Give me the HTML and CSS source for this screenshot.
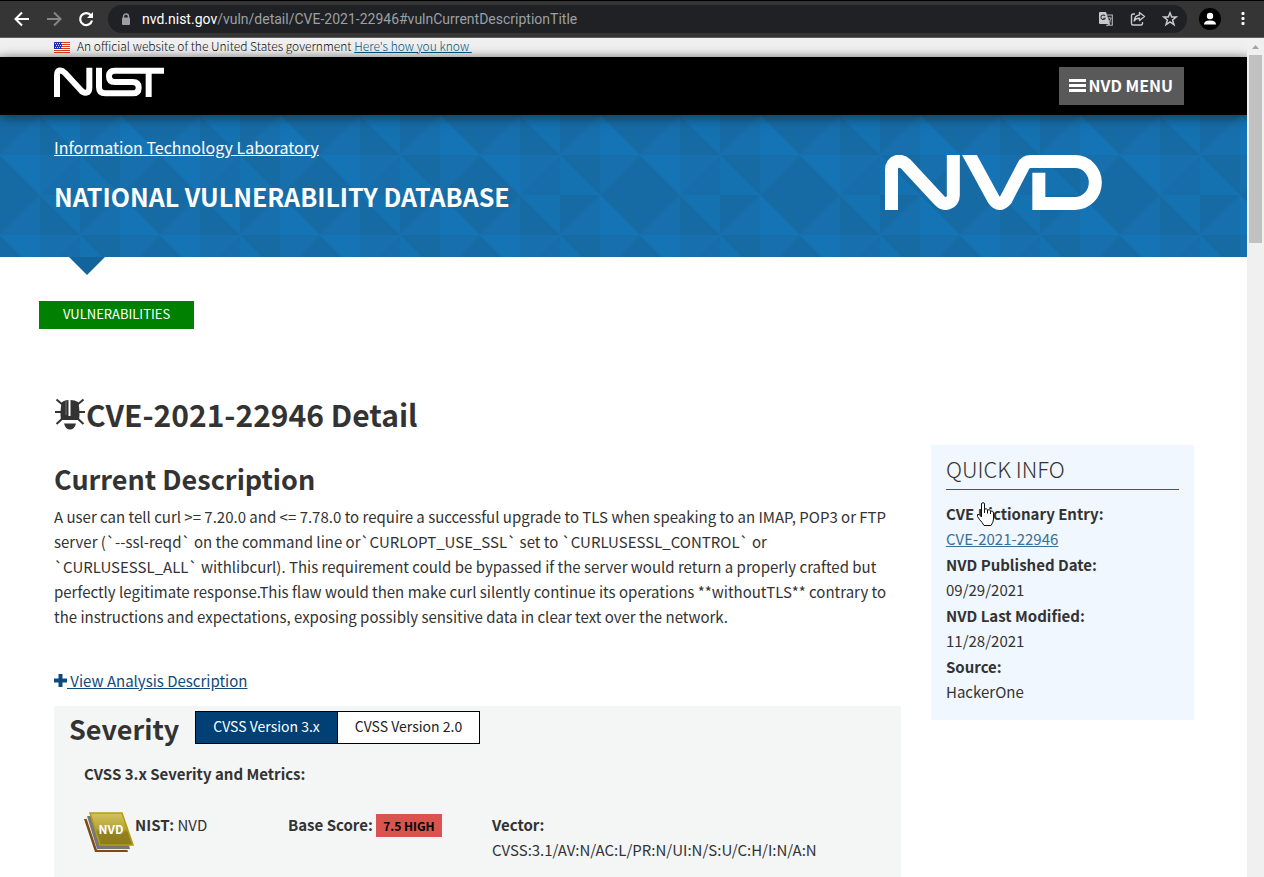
FILE: index.html
```
<!DOCTYPE html>
<html lang="en">
<head>
<meta charset="utf-8">
<title>NVD - CVE-2021-22946</title>
<link rel="stylesheet" href="styles.css">
</head>
<body>
<div class="toolbar">
  <button class="tool" aria-label="Back"><svg width="16" height="16" viewBox="0 0 16 16" fill="none" stroke="#fff" stroke-width="2"><path d="M15 8H2M8 1.500L1.500 8L8 14.500"/></svg></button>
  <button class="tool" aria-label="Forward"><svg width="16" height="16" viewBox="0 0 16 16" fill="none" stroke="#858585" stroke-width="2"><path d="M1 8H14M8 1.500L14.500 8L8 14.500"/></svg></button>
  <button class="tool" aria-label="Reload"><svg width="16" height="16" viewBox="0 0 16 16"><path d="M13 4.500A6 6 0 1 0 14 9.500" fill="none" stroke="#fff" stroke-width="2.200"/><path d="M15 1V7H9Z" fill="#fff"/></svg></button>
  <div class="address">
    <svg width="10" height="13" viewBox="0 0 10 13"><rect x="1" y="4.500" width="8" height="7.500" rx="1" fill="#9aa0a6"/><path d="M2.500 5V3.500a2.500 2.500 0 0 1 5 0V5" fill="none" stroke="#9aa0a6" stroke-width="1.400"/></svg>
    <span class="url"><b>nvd.nist.gov</b>/vuln/detail/CVE-2021-22946#vulnCurrentDescriptionTitle</span>
    <button class="tool" aria-label="Translate"><svg width="16" height="16" viewBox="0 0 16 16"><path d="M2 1H8L12 13H2Q1 13 1 12V2Q1 1 2 1Z" fill="#c7c9cb"/><path d="M8.600 4H14.300V14.300H9.500L11.800 13M8.500 14L9.500 15" fill="none" stroke="#b4b6b8" stroke-width="1.100"/><path d="M7 5A2.200 2.200 0 1 0 7.200 7.200H5.200" fill="none" stroke="#333" stroke-width="1.100"/><path d="M9.800 7H13.500M11.500 6V7M13 7Q12.500 10 10.500 11.500M10.500 8.500L13 11.500" fill="none" stroke="#b4b6b8" stroke-width=".8"/></svg></button>
    <button class="tool" aria-label="Share"><svg width="16" height="16" viewBox="0 0 16 16" fill="none" stroke="#c7c9cb" stroke-width="1.400" stroke-linejoin="round"><path d="M5 3H3Q1.500 3 1.500 4.500V12.500Q1.500 14 3 14H11Q12.500 14 12.500 12.500V11"/><path d="M9.500 1.500L14.500 5.500L9.500 9.500V7.200Q6 7 4.200 10Q4.500 4.500 9.500 4Z"/></svg></button>
    <button class="tool" aria-label="Bookmark"><svg width="16" height="16" viewBox="0 0 16 16" fill="none" stroke="#c7c9cb" stroke-width="1.500"><path d="M8 1.800L9.700 6H14.200L10.600 8.900L12 13.700L8 11L4 13.700L5.400 8.900L1.800 6H6.300Z"/></svg></button>
  </div>
  <button class="tool profile" aria-label="Profile"><svg width="22" height="22" viewBox="0 0 22 22"><circle cx="11" cy="11" r="11"/><circle cx="11" cy="8" r="3.200" fill="#fff"/><path d="M5 16.500Q5 12.500 11 12.500Q17 12.500 17 16.500Z" fill="#fff"/></svg></button>
  <button class="tool more" aria-label="More"><svg width="4" height="14" viewBox="0 0 4 14" fill="#fff"><rect x=".5" y="0" width="3" height="3" rx="1"/><rect x=".5" y="5" width="3" height="3" rx="1"/><rect x=".5" y="10" width="3" height="3" rx="1"/></svg></button>
</div>
<div class="viewport">
  <div class="page">
    <div class="gov-banner"><div class="container">
      <svg class="flag" width="16" height="11" viewBox="0 0 16 11"><path d="M0 0H16V11H0Z" fill="#fff"/><path d="M0 .5H16M0 2.500H16M0 4.500H16M0 6.500H16M0 8.500H16M0 10.500H16" stroke="#db3e1f"/><path d="M0 0H8V7H0Z" fill="#1e33b1"/><path d="M1 1.500H8M2 3.500H8M1 5.500H8" stroke="#dfe3ff" stroke-dasharray="1 1"/></svg>
      <span>An official website of the United States government <a href="#">Here's how you know&nbsp;</a></span>
    </div></div>
    <header class="masthead"><div class="container">
      <a href="#" aria-label="NIST"><svg class="nist" width="110" height="30" viewBox="162 201 330 90" fill="none" stroke="#fff" stroke-width="18"><path d="M171 291V226C171 208 184 208 195 219L242 270C253 283 268 280 268 264V203"/><path d="M297 203V261Q297 280 316 280H398Q416 280 416 263Q416 246 398 246H344Q327 246 327 229Q327 212 344 212H492M446 212V291"/></svg></a>
      <button class="menu"><svg width="17" height="14" viewBox="0 0 17 14"><path d="M0 2.500H17M0 7.500H17M0 12.500H17" stroke="#fff" stroke-width="3"/></svg>NVD MENU</button>
    </div></header>
    <div class="hero"><div class="container">
      <div class="titles">
        <a class="lab" href="#">Information Technology Laboratory</a>
        <p class="site-name">NATIONAL VULNERABILITY DATABASE</p>
      </div>
      <svg class="nvd" width="217" height="55" viewBox="75 135 651 165" fill="none" stroke="#fff" stroke-width="39" role="img" aria-label="NVD"><path d="M94.500 300V179C94.500 151 122 148 138 163L238 271C252 287 280 282 280 256V135"/><path d="M318 116L401 268Q418 293 438 268L490 168Q497 154.500 512 154.500H645A61 63 0 0 1 645 280.500H536.500V188"/></svg>
    </div></div>
    <div class="container notch"><svg width="36" height="18" viewBox="0 0 36 18"><path d="M0 0H36L18 18Z" fill="#12659c"/></svg></div>
    <div class="container main">
      <span class="tag">VULNERABILITIES</span>
      <h1><svg width="32" height="32" viewBox="0 0 32 32" fill="#333"><path d="M8 4Q11 2 14.500 2V18H16.500V2Q21 2 24 4Q25.500 8 25.500 17L25 22H7L6.500 17Q6.500 8 8 4Z"/><path d="M10 25.500H22Q20.500 31.500 16 31.500Q11.500 31.500 10 25.500Z"/><path d="M2.500 1.500L9 7M29.500 1.500L23 7M1 14H8M31 14H24M2.500 26L9 20M29.500 26L23 20" stroke="#333" stroke-width="2"/><path d="M12 3V17" fill="none" stroke="#777"/></svg>CVE-2021-22946 Detail</h1>
      <div class="columns">
        <main>
          <h2>Current Description</h2>
          <p class="description">A user can tell curl &gt;= 7.20.0 and &lt;= 7.78.0 to require a successful upgrade to TLS when speaking to an IMAP, POP3 or FTP<br>server (`--ssl-reqd` on the command line or`CURLOPT_USE_SSL` set to `CURLUSESSL_CONTROL` or<br>`CURLUSESSL_ALL` withlibcurl). This requirement could be bypassed if the server would return a properly crafted but<br>perfectly legitimate response.This flaw would then make curl silently continue its operations **withoutTLS** contrary to<br>the instructions and expectations, exposing possibly sensitive data in clear text over the network.</p>
          <a class="analysis" href="#"><svg width="13" height="13" viewBox="0 0 13 13"><path d="M6.500 0V13M0 6.500H13" stroke="#0f4a7b" stroke-width="4"/></svg>&nbsp;View Analysis Description</a>
          <section class="severity">
            <div class="severity-head">
              <h2>Severity</h2>
              <div class="versions"><button class="on">CVSS Version 3.x</button><button>CVSS Version 2.0</button></div>
            </div>
            <div class="metrics">
              <strong class="metrics-title">CVSS 3.x Severity and Metrics:</strong>
              <div class="metrics-row">
                <div class="source">
                  <svg width="50" height="41" viewBox="0 0 50 41"><defs><linearGradient id="gold" x1="0" y1="0" x2="0" y2="1"><stop offset="0" stop-color="#d3c25f"/><stop offset=".5" stop-color="#b5a238"/><stop offset=".6" stop-color="#93821f"/><stop offset="1" stop-color="#8c7b1d"/></linearGradient></defs><path d="M0 7H34L44 40H11Z" fill="#7b4b18"/><path d="M2 5H36L46 38H13Z" fill="#f2eee5"/><path d="M3 4H37L46 37H13Z" fill="#777"/><path d="M6 1H38L49 33H16Z" fill="url(#gold)" stroke="#b29d16" stroke-width="1.500"/><text x="27" y="22" text-anchor="middle" class="book-text">NVD</text></svg>
                  <p><strong>NIST:</strong> NVD</p>
                </div>
                <p><strong>Base Score:</strong> <a class="score" href="#">7.5 HIGH</a></p>
                <p class="vector"><strong>Vector:</strong><br>CVSS:3.1/AV:N/AC:L/PR:N/UI:N/S:U/C:H/I:N/A:N</p>
              </div>
            </div>
          </section>
        </main>
        <aside>
          <h3>QUICK INFO</h3>
          <dl>
            <dt>CVE Dictionary Entry:</dt><dd><a href="#">CVE-2021-22946</a></dd>
            <dt>NVD Published Date:</dt><dd>09/29/2021</dd>
            <dt>NVD Last Modified:</dt><dd>11/28/2021</dd>
            <dt>Source:</dt><dd>HackerOne</dd>
          </dl>
          <svg class="cursor" width="19" height="25" viewBox="0 0 19 25" fill="#fff" stroke="#111" stroke-linejoin="round"><path d="M5.500 15V2Q5.500 .7 7 .7Q8.500 .7 8.500 2V7Q11 6 11.500 8Q14 7 14.500 9Q17.500 8.500 17.500 11V17Q17.500 20 15 23.500H8Q6 20 3.500 17.500Q.5 14 1.500 12.500Q3 11.500 5.500 15Z"/><path d="M8.500 7V11M11.500 8V11.500M14.500 9V12" fill="none"/></svg>
        </aside>
      </div>
    </div>
  </div>
  <div class="scrollbar"><svg width="17" height="17" viewBox="0 0 17 17"><path d="M5 11L8.500 7L12 11Z" fill="#a3a3a3"/></svg><div class="thumb"></div></div>
</div>
</body>
</html>
```
FILE: styles.css
```
* { box-sizing: border-box; }
body {
  margin: 0;
  height: 100vh;
  display: flex;
  flex-direction: column;
  overflow: hidden;
  font: 15px/25px "Noto Sans CJK SC", "Noto Sans", sans-serif;
  color: #333;
  background: #fff;
}
p, h1, h2, h3, dl, dd { margin: 0; }
svg { display: block; flex: none; }
button { font: inherit; border: 0; padding: 0; }
strong { font-weight: 700; }

.toolbar {
  flex: none;
  display: flex;
  align-items: center;
  gap: 16px;
  height: 38px;
  padding: 0 19px 0 14px;
  background: #353535;
  border-top: 1px solid #000;
  border-bottom: 1px solid #5d5d5d;
}
.tool { background: none; display: flex; }
.address {
  flex: 1;
  display: flex;
  align-items: center;
  gap: 16px;
  height: 28px;
  margin-right: -4px;
  margin-left: -2px;
  padding: 0 9px 0 13px;
  border-radius: 14px;
  background: #202124;
}
.url {
  flex: 1;
  margin-left: -5px;
  font: 14px/20px Roboto, sans-serif;
  color: #9aa0a6;
  white-space: nowrap;
}
.url b { font-weight: 400; color: #fff; }
.more { margin-left: 4px; }

.viewport { flex: 1; display: flex; min-height: 0; }
.page { flex: 1; min-width: 0; overflow: hidden; }
.scrollbar { width: 17px; background: #f0f0f0; }
.thumb { height: 188px; margin: 0 2px; background: #c1c1c1; }
.container { max-width: 1169px; margin: 0 auto; padding: 0 14px 0 15px; }

.gov-banner { background: linear-gradient(#f0f0f0 70%, #dadada); font-size: 12px; font-weight: 300; line-height: 16px; padding-bottom: 3px; color: #111; }
.gov-banner .container { display: flex; align-items: center; gap: 7px; }
.gov-banner a { color: #00577f; }
.flag { margin-top: 3px; }

.masthead {
  position: relative;
  background: #000;
  box-shadow: 0 2px 12px rgba(0, 0, 0, .5);
}
.masthead .container { display: flex; justify-content: space-between; align-items: flex-start; height: 58px; padding-top: 10px; }
.menu {
  display: flex;
  align-items: center;
  gap: 3px;
  height: 38px;
  margin-right: 10px;
  padding: 0 11px 2px 10px;
  background: #595959;
  color: #fff;
  font-size: 16px;
  font-weight: 700;
}

.hero {
  background: #1770ad url("data:image/svg+xml,%3Csvg xmlns='http://www.w3.org/2000/svg' width='160' height='80'%3E%3Cpath fill='%231770ad' d='M0 0h160v80H0z'/%3E%3Cpath fill='%23176ba5' d='M0 0h40L0 40zM40 0l40 40H40zM80 0h40L80 40zM120 0h40v40zM0 40l40 40H0zM80 40h40v40zM160 40v40h-40z'/%3E%3Cpath fill='%23176da9' d='M80 40v40H40z'/%3E%3Cpath fill='%231474b5' d='M120 0l40 40h-40zM0 40h40v40z'/%3E%3Cpath fill='%231572b1' d='M40 0h40v40zM80 40l40 40H80z'/%3E%3C/svg%3E");
  color: #fff;
}
.hero .container { display: flex; justify-content: space-between; height: 142px; padding-top: 19px; }
.lab { color: #fff; font-size: 16px; line-height: 26px; }
.site-name { margin-top: 18px; font-size: 25px; line-height: 36px; font-weight: 700; }
.nvd { margin: 21px 92px 0 0; }
.notch { padding-left: 30px; }

.main { padding-top: 26px; }
.tag {
  display: block;
  width: fit-content;
  margin-left: -15px;
  padding: 0 24px 2px;
  background: #008000;
  color: #fff;
  font-size: 13px;
  line-height: 26px;
}
h1 {
  display: flex;
  align-items: center;
  margin-top: 64px;
  font-size: 30px;
  line-height: 42px;
}
h2 { font-size: 27px; line-height: 40px; }
.columns { display: flex; gap: 30px; align-items: flex-start; padding-top: 10px; }
main { flex: 1; min-width: 0; padding-top: 14px; }
.description { margin-top: 5px; white-space: nowrap; }
.analysis { display: flex; align-items: center; width: fit-content; margin-top: 39px; color: #0f4a7b; }
.severity { margin-top: 13px; padding: 3px 15px 25px; min-height: 190px; background: #f3f6f5; }
.severity-head { display: flex; align-items: flex-start; gap: 16px; }
.versions { display: flex; margin-top: 2px; border: 1px solid #000; }
.versions button { height: 31px; padding: 0 17px 2px; background: #fff; color: #222; font-size: 14px; }
.versions .on { background: #004074; color: #fff; border-right: 1px solid #000; }
.metrics { padding: 12px 15px; }
.metrics-row { display: grid; grid-template-columns: 204px 204px 1fr; margin-top: 26px; }
.source { display: flex; gap: 1px; }
.book-text { font: 700 12px "Noto Sans CJK SC", sans-serif; fill: #fff; }
.score { display: inline-block; padding: 0 7px; background: #d9534f; color: #000; font-size: 12px; line-height: 23px; font-weight: 700; text-decoration: none; }

aside { position: relative; width: 263px; padding: 8px 15px 15px; background: #f0f7fe; }
h3 { border-bottom: 1px solid #12659c; padding-bottom: 6px; font-size: 22px; line-height: 30px; font-weight: 300; }
dl { margin-top: 11px; }
dt { font-weight: 700; line-height: 25px; }
dd { line-height: 26px; }
dd a { color: #39709a; }
.cursor { position: absolute; left: 45px; top: 57px; }
```
